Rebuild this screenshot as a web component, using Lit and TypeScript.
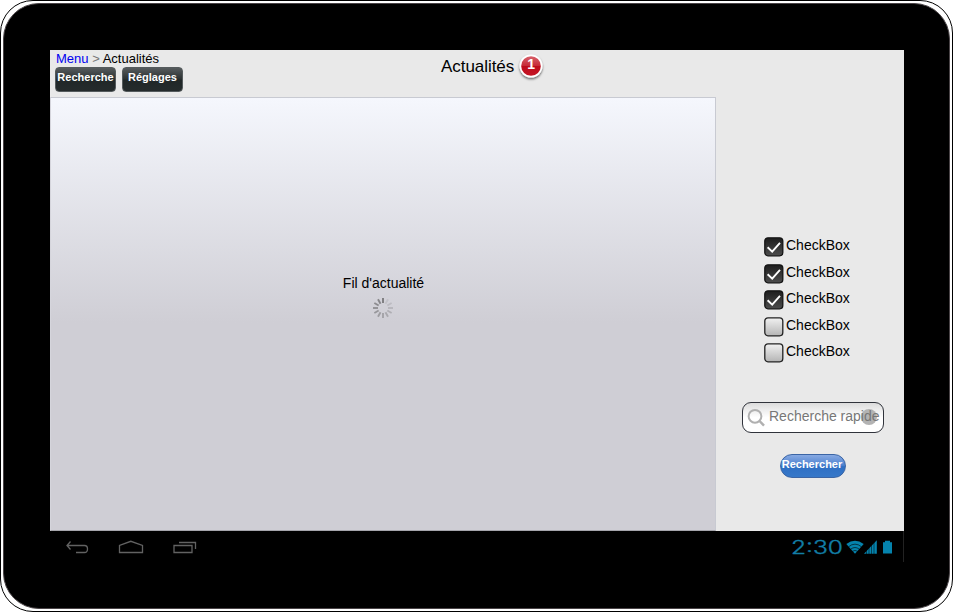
import { LitElement, html, svg, css } from "lit";
import { customElement, property } from "lit/decorators.js";

@customElement("check-row")
class CheckRow extends LitElement {
  @property({ type: Boolean }) checked = false;
  @property() label = "";

  static styles = css`
    :host { display: flex; height: 20px; gap: 2px; }
    .box { display: block; flex: none; width: 20px; height: 20px; }
    .label { line-height: 16px; white-space: nowrap; }
  `;

  render() {
    return html`
      <svg class="box" viewBox="0 0 20 20">
        <defs>
          <linearGradient id="g" x1="0" y1="0" x2="0" y2="1">
            <stop offset="0" stop-color=${this.checked ? "#1d1d1d" : "#f2f2f2"} />
            <stop offset="1" stop-color=${this.checked ? "#4c4c4c" : "#b4b4b4"} />
          </linearGradient>
        </defs>
        <rect x="0.8" y="0.8" width="18" height="18" rx="3.2" fill="url(#g)"
          stroke=${this.checked ? "#151515" : "#222"} stroke-width="1.3" />
        ${this.checked
          ? svg`<path d="M3.6 10.2 L8.2 14.6 L16 5.8" fill="none" stroke="#fff" stroke-width="1.9" />`
          : null}
      </svg>
      <span class="label">${this.label}</span>
    `;
  }
}

@customElement("app-root")
class AppRoot extends LitElement {
  static styles = css`
    :host {
      display: block; width: 953px; height: 612px; background: #fff;
      font: 14px "Liberation Sans", Arial, sans-serif; color: #000;
    }
    * { box-sizing: border-box; }
    .shell {
      height: 612px; padding: 2px; background: #fff;
      border: 1px solid #000; border-radius: 33px;
    }
    .device {
      height: 606px; background: #000; border-radius: 36px;
      border: 1px solid #4a4447;
      padding: 46px 45px 45px 46px;
    }
    .screen { width: 854px; height: 481px; background: #e9e9e9; display: flex; flex-direction: column; }
    .top { height: 47px; flex: none; display: grid; grid-template-columns: 391px auto 1fr; }
    .crumbs { font-size: 13px; line-height: 15px; padding: 1px 0 0 6px; white-space: pre; height: 17px; }
    .crumbs a { color: #0000f0; }
    .crumbs i { color: #777; font-style: normal; }
    .actions { display: flex; gap: 6px; padding-left: 5px; }
    .dark {
      width: 61px; height: 25px; border: 1px solid #555b5d; border-radius: 4px;
      background: linear-gradient(#565b5d, #2b3132 48%, #202728 52%, #252b2c);
      color: #fff; font-weight: bold; font-size: 11px; line-height: 19px;
      display: flex; justify-content: center; white-space: nowrap;
    }
    .title { display: flex; font-size: 17px; gap: 3px; line-height: 20px; padding-top: 7px; letter-spacing: -0.05px; }
    .badge { display: block; width: 30px; height: 30px; margin-top: -5px; overflow: visible; }
    .main { flex: 1; display: flex; min-height: 0; }
    .feed {
      width: 666px; border: 1px solid #c8cad2; border-left-color: #d5d5dc; border-bottom-color: #a5a5ab;
      background: linear-gradient(#f5f7fd, #cfced5 52%, #cfced5);
      display: flex; flex-direction: column; align-items: center; padding: 176px 0 0 1px; gap: 5px;
    }
    .feed span { line-height: 18px; }
    .spin { display: block; width: 22px; height: 22px; margin-right: 2px; }
    .side { width: 188px; display: flex; flex-direction: column; }
    .checks { display: flex; flex-direction: column; gap: 6.5px; padding: 140px 0 0 48px; }
    .search {
      margin: 39px 0 0 26px; width: 142px; height: 31px; flex: none;
      border: 1px solid #30333b; border-radius: 9px;
      background: linear-gradient(#dcdcdc, #fff 50%);
      display: flex; align-items: center; padding-left: 4px; gap: 3px; color: #777;
    }
    .glass { display: block; width: 19px; height: 20px; flex: none; }
    .field { position: relative; white-space: nowrap; line-height: 16px; margin-top: -3px; }
    .clear {
      position: absolute; right: 3px; top: 1px; width: 16px; height: 16px;
      border-radius: 50%; background: #b3b3b3;
    }
    .field span { position: relative; }
    .go {
      margin: 21px 0 0 64px; width: 66px; height: 24px; padding-right: 2px;
      border: 1px solid #3b65a5; border-radius: 12px;
      background: linear-gradient(#87a9e2, #4d82d0 47%, #2f6fc4 53%, #3678c9);
      color: #fff; font-weight: bold; font-size: 11px; line-height: 19px;
      display: flex; justify-content: center; white-space: nowrap;
    }
    .nav { width: 854px; height: 31px; display: flex; justify-content: space-between; border-right: 1px solid #222; }
    .nav svg { display: block; }
  `;

  render() {
    return html`
      <div class="shell"><div class="device">
        <div class="screen">
          <header class="top">
            <div>
              <div class="crumbs"><a>Menu</a> <i>&gt;</i> Actualités</div>
              <div class="actions">
                <div class="dark">Recherche</div>
                <div class="dark">Réglages</div>
              </div>
            </div>
            <div class="title">
              <span>Actualités</span>
              <svg class="badge" viewBox="0 0 30 30">
                <defs>
                  <linearGradient id="red" x1="0" y1="0" x2="0" y2="1">
                    <stop offset="0" stop-color="#d8616b" />
                    <stop offset=".48" stop-color="#c72b38" />
                    <stop offset=".52" stop-color="#bd0c1b" />
                    <stop offset="1" stop-color="#c51525" />
                  </linearGradient>
                  <filter id="sh" x="-20%" y="-20%" width="150%" height="150%">
                    <feDropShadow dx="0" dy="1.5" stdDeviation="1" flood-opacity=".6" />
                  </filter>
                </defs>
                <circle cx="14" cy="14" r="11.5" fill="#fff" filter="url(#sh)" />
                <circle cx="14" cy="14" r="9.8" fill="url(#red)" />
                <text x="14" y="16.8" text-anchor="middle" font-size="14" font-weight="bold" fill="#fff">1</text>
              </svg>
            </div>
          </header>
          <div class="main">
            <section class="feed">
              <span>Fil d'actualité</span>
              <svg class="spin" viewBox="-11 -11 22 22">
                ${Array.from({ length: 12 }, (_, i) => svg`
                  <line x1="0" y1="-5" x2="0" y2="-10" stroke="#444" stroke-width="1.9"
                    opacity=${i === 0 ? 0.6 : 0.06 + i * 0.043}
                    transform="rotate(${i * 30})" />`)}
              </svg>
            </section>
            <aside class="side">
              <div class="checks">
                ${[true, true, true, false, false].map(
                  (c) => html`<check-row .checked=${c} label="CheckBox"></check-row>`
                )}
              </div>
              <div class="search">
                <svg class="glass" viewBox="0 0 19 20">
                  <circle cx="8" cy="8.3" r="6.4" fill="none" stroke="#b0b0b0" stroke-width="2" />
                  <path d="M12.5 13 L17 17.6" stroke="#b0b0b0" stroke-width="2.5" />
                </svg>
                <div class="field"><i class="clear"></i><span>Recherche rapide</span></div>
              </div>
              <div class="go">Rechercher</div>
            </aside>
          </div>
        </div>
        <footer class="nav">
          <svg width="160" height="31" viewBox="50 531 160 31" fill="none" stroke="#626262" stroke-width="1.3">
            <path d="M70.5 541.5 L67 545.5 L70.5 549.5 M67 545.5 H84.5 Q87.5 545.5 87.5 549 Q87.5 552.5 84.5 552.5 H76" />
            <path d="M119.5 552.5 V545.5 L130.8 541.3 L142.5 545.5 V552.5 Z" />
            <path d="M174 545.5 H192 V552.5 H174 Z M179 542.5 H195.5 V549" />
          </svg>
          <svg width="113" height="31" viewBox="790 531 113 31">
            <text x="791" y="553.7" font-family="Inter, sans-serif" font-weight="300" font-size="18"
              textLength="52" lengthAdjust="spacingAndGlyphs" fill="#127ea6"
              stroke="#127ea6" stroke-width=".35">2:30</text>
            <path d="M846.3 544 Q855 537.5 863.7 544 L855 553.8 Z" fill="#0583ad" />
            <path d="M848.5 546.8 Q855 541.5 861.5 546.8 M850.7 549.2 Q855 545.8 859.3 549.2 M852.5 551.3 Q855 549.5 857.5 551.3"
              fill="none" stroke="#000" stroke-width=".6" />
            <path d="M864 553.8 L876.8 540.3 V553.8 Z" fill="#0583ad" />
            <path d="M866.5 540 V554 M869 540 V554 M871.5 540 V554 M874 540 V554" stroke="#000" stroke-width=".5" />
            <path d="M883 542.2 H885 V540.8 H890 V542.2 H892 V553.5 H883 Z" fill="#0583ad" />
          </svg>
        </footer>
      </div></div>
    `;
  }
}
